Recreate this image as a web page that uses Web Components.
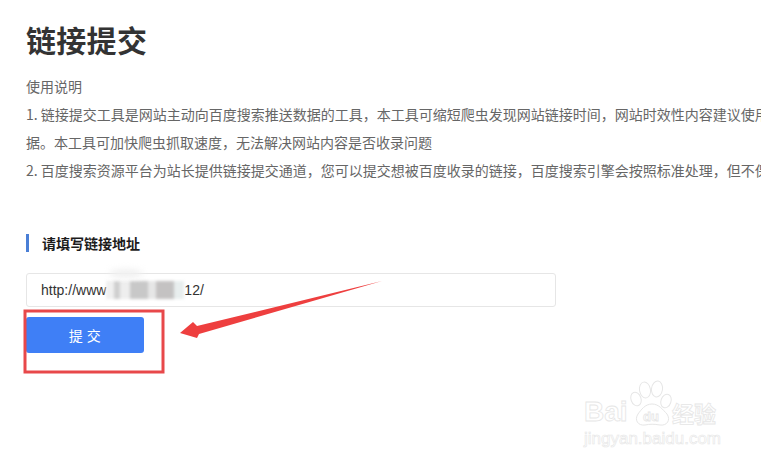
<!DOCTYPE html>
<html lang="zh">
<head>
<meta charset="utf-8">
<title>链接提交</title>
<style>
  html, body { margin: 0; height: 100%; background: #fff; overflow: hidden; }
  body { font-family: "Noto Sans CJK SC", "Liberation Sans", sans-serif; }
</style>
</head>
<body>
<submit-page>
  <page-title>链接提交</page-title>
  <usage-notes>
    <p>使用说明</p>
    <p>1. 链接提交工具是网站主动向百度搜索推送数据的工具，本工具可缩短爬虫发现网站链接时间，网站时效性内容建议使用</p>
    <p>据。本工具可加快爬虫抓取速度，无法解决网站内容是否收录问题</p>
    <p>2. 百度搜索资源平台为站长提供链接提交通道，您可以提交想被百度收录的链接，百度搜索引擎会按照标准处理，但不保</p>
  </usage-notes>
  <section-heading>请填写链接地址</section-heading>
  <url-field><span slot="start">http://www</span><span slot="end">12/</span></url-field>
  <submit-button>提 交</submit-button>
</submit-page>
<mark-up></mark-up>
<baidu-watermark></baidu-watermark>

<script>
class SubmitPage extends HTMLElement {
  constructor() {
    super();
    this.attachShadow({ mode: 'open' }).innerHTML = `
      <style>
        :host { display: flex; flex-direction: column; align-items: flex-start; padding: 0 0 0 26px; }
      </style>
      <slot></slot>`;
  }
}

class PageTitle extends HTMLElement {
  constructor() {
    super();
    this.attachShadow({ mode: 'open' }).innerHTML = `
      <style>
        :host { display: block; margin-top: 18px; font-size: 30px; line-height: 42px; font-weight: 700; letter-spacing: .3px; color: #333; }
      </style>
      <slot></slot>`;
  }
}

class UsageNotes extends HTMLElement {
  constructor() {
    super();
    this.attachShadow({ mode: 'open' }).innerHTML = `
      <style>
        :host { display: block; width: 735px; margin-top: 12px; overflow: hidden; font-size: 14px; line-height: 28px; color: #666; white-space: nowrap; }
        ::slotted(p) { margin: 0; }
      </style>
      <slot></slot>`;
  }
}

class SectionHeading extends HTMLElement {
  constructor() {
    super();
    this.attachShadow({ mode: 'open' }).innerHTML = `
      <style>
        :host { display: block; margin-top: 50px; padding-left: 13px; border-left: 3px solid #4a7fd6; font-size: 14px; line-height: 18px; font-weight: 700; color: #1c1c1c; }
      </style>
      <slot></slot>`;
  }
}

class UrlField extends HTMLElement {
  constructor() {
    super();
    this.attachShadow({ mode: 'open' }).innerHTML = `
      <style>
        :host { display: flex; align-items: center; position: relative; box-sizing: border-box; width: 530px; height: 34px; margin-top: 21px; padding-left: 14px; border: 1px solid #e6e6e6; border-radius: 3px; font: 14px/32px "Liberation Sans", sans-serif; color: #333; }
        .blur { width: 78px; height: 18px; filter: blur(1.5px);
          background: linear-gradient(90deg, #f0f0f0 0 8px, #cfcfcf 8px 14px, #eeeeee 14px 24px, #c8c8c8 24px 42px, #e6e6e6 42px 50px, #c4c2c2 50px 68px, #e8eeee 68px 78px); }
        .smear { position: absolute; left: 82px; top: -5px; width: 34px; height: 9px; background: #f0f0f0; border-radius: 50%; filter: blur(3px); }
      </style>
      <slot name="start"></slot><div class="blur"></div><slot name="end"></slot><div class="smear"></div>`;
  }
}

class SubmitButton extends HTMLElement {
  constructor() {
    super();
    this.attachShadow({ mode: 'open' }).innerHTML = `
      <style>
        :host { display: flex; align-items: center; justify-content: center; width: 118px; height: 36px; margin-top: 10px; background: #3f7ff6; border-radius: 3px; font-size: 14px; letter-spacing: .5px; color: #fff; }
      </style>
      <slot></slot>`;
  }
}

class MarkUp extends HTMLElement {
  constructor() {
    super();
    this.attachShadow({ mode: 'open' }).innerHTML = `
      <style>
        :host { position: absolute; left: 0; top: 0; pointer-events: none; }
        svg { display: block; }
      </style>
      <svg width="761" height="463" viewBox="0 0 761 463">
        <rect x="25" y="311" width="138" height="61" fill="none" stroke="#e8484a" stroke-width="3"/>
        <path d="M382 281 L197 326 L193 322 L180 333 L197 338 L199 334 Z" fill="#ee3f3f"/>
      </svg>`;
  }
}

class BaiduWatermark extends HTMLElement {
  constructor() {
    super();
    this.attachShadow({ mode: 'open' }).innerHTML = `
      <style>
        :host { position: absolute; left: 583px; top: 380px; width: 150px; height: 72px; pointer-events: none; }
        svg { position: absolute; left: 0; top: 0; }
        span { position: absolute; white-space: nowrap; -webkit-text-fill-color: #fff; -webkit-text-stroke: .8px #e6e6e6; font-family: "Liberation Sans", sans-serif; font-weight: 700; }
        .bai { left: 1px; top: 16px; font-size: 28px; line-height: 32px; }
        .du { left: 60px; top: 30px; font-size: 13px; line-height: 14px; }
        .cn { left: 89px; top: 17px; font-size: 22px; line-height: 30px; font-family: "Noto Sans CJK SC", sans-serif; }
        .url { left: 1px; top: 49px; font-size: 17px; line-height: 20px; font-weight: 400; -webkit-text-stroke-width: .6px; }
      </style>
      <svg width="150" height="60" viewBox="0 0 150 60" fill="#fff" stroke="#e6e6e6" stroke-width="1">
        <ellipse cx="62" cy="10" rx="5.5" ry="8" transform="rotate(-10 62 10)"/>
        <ellipse cx="74" cy="9" rx="5.5" ry="8" transform="rotate(8 74 9)"/>
        <ellipse cx="53" cy="19" rx="5" ry="7" transform="rotate(-20 53 19)"/>
        <ellipse cx="83" cy="21" rx="5" ry="7" transform="rotate(20 83 21)"/>
        <path d="M69 24 C62 24 58 30 55 34 C51 40 55 46 62 45 C67 44 71 44 77 45 C84 46 88 40 84 34 C80 30 76 24 69 24 Z"/>
      </svg>
      <span class="bai">Bai</span>
      <span class="du">du</span>
      <span class="cn">经验</span>
      <span class="url">jingyan.baidu.com</span>`;
  }
}

customElements.define('submit-page', SubmitPage);
customElements.define('page-title', PageTitle);
customElements.define('usage-notes', UsageNotes);
customElements.define('section-heading', SectionHeading);
customElements.define('url-field', UrlField);
customElements.define('submit-button', SubmitButton);
customElements.define('mark-up', MarkUp);
customElements.define('baidu-watermark', BaiduWatermark);
</script>
</body>
</html>
